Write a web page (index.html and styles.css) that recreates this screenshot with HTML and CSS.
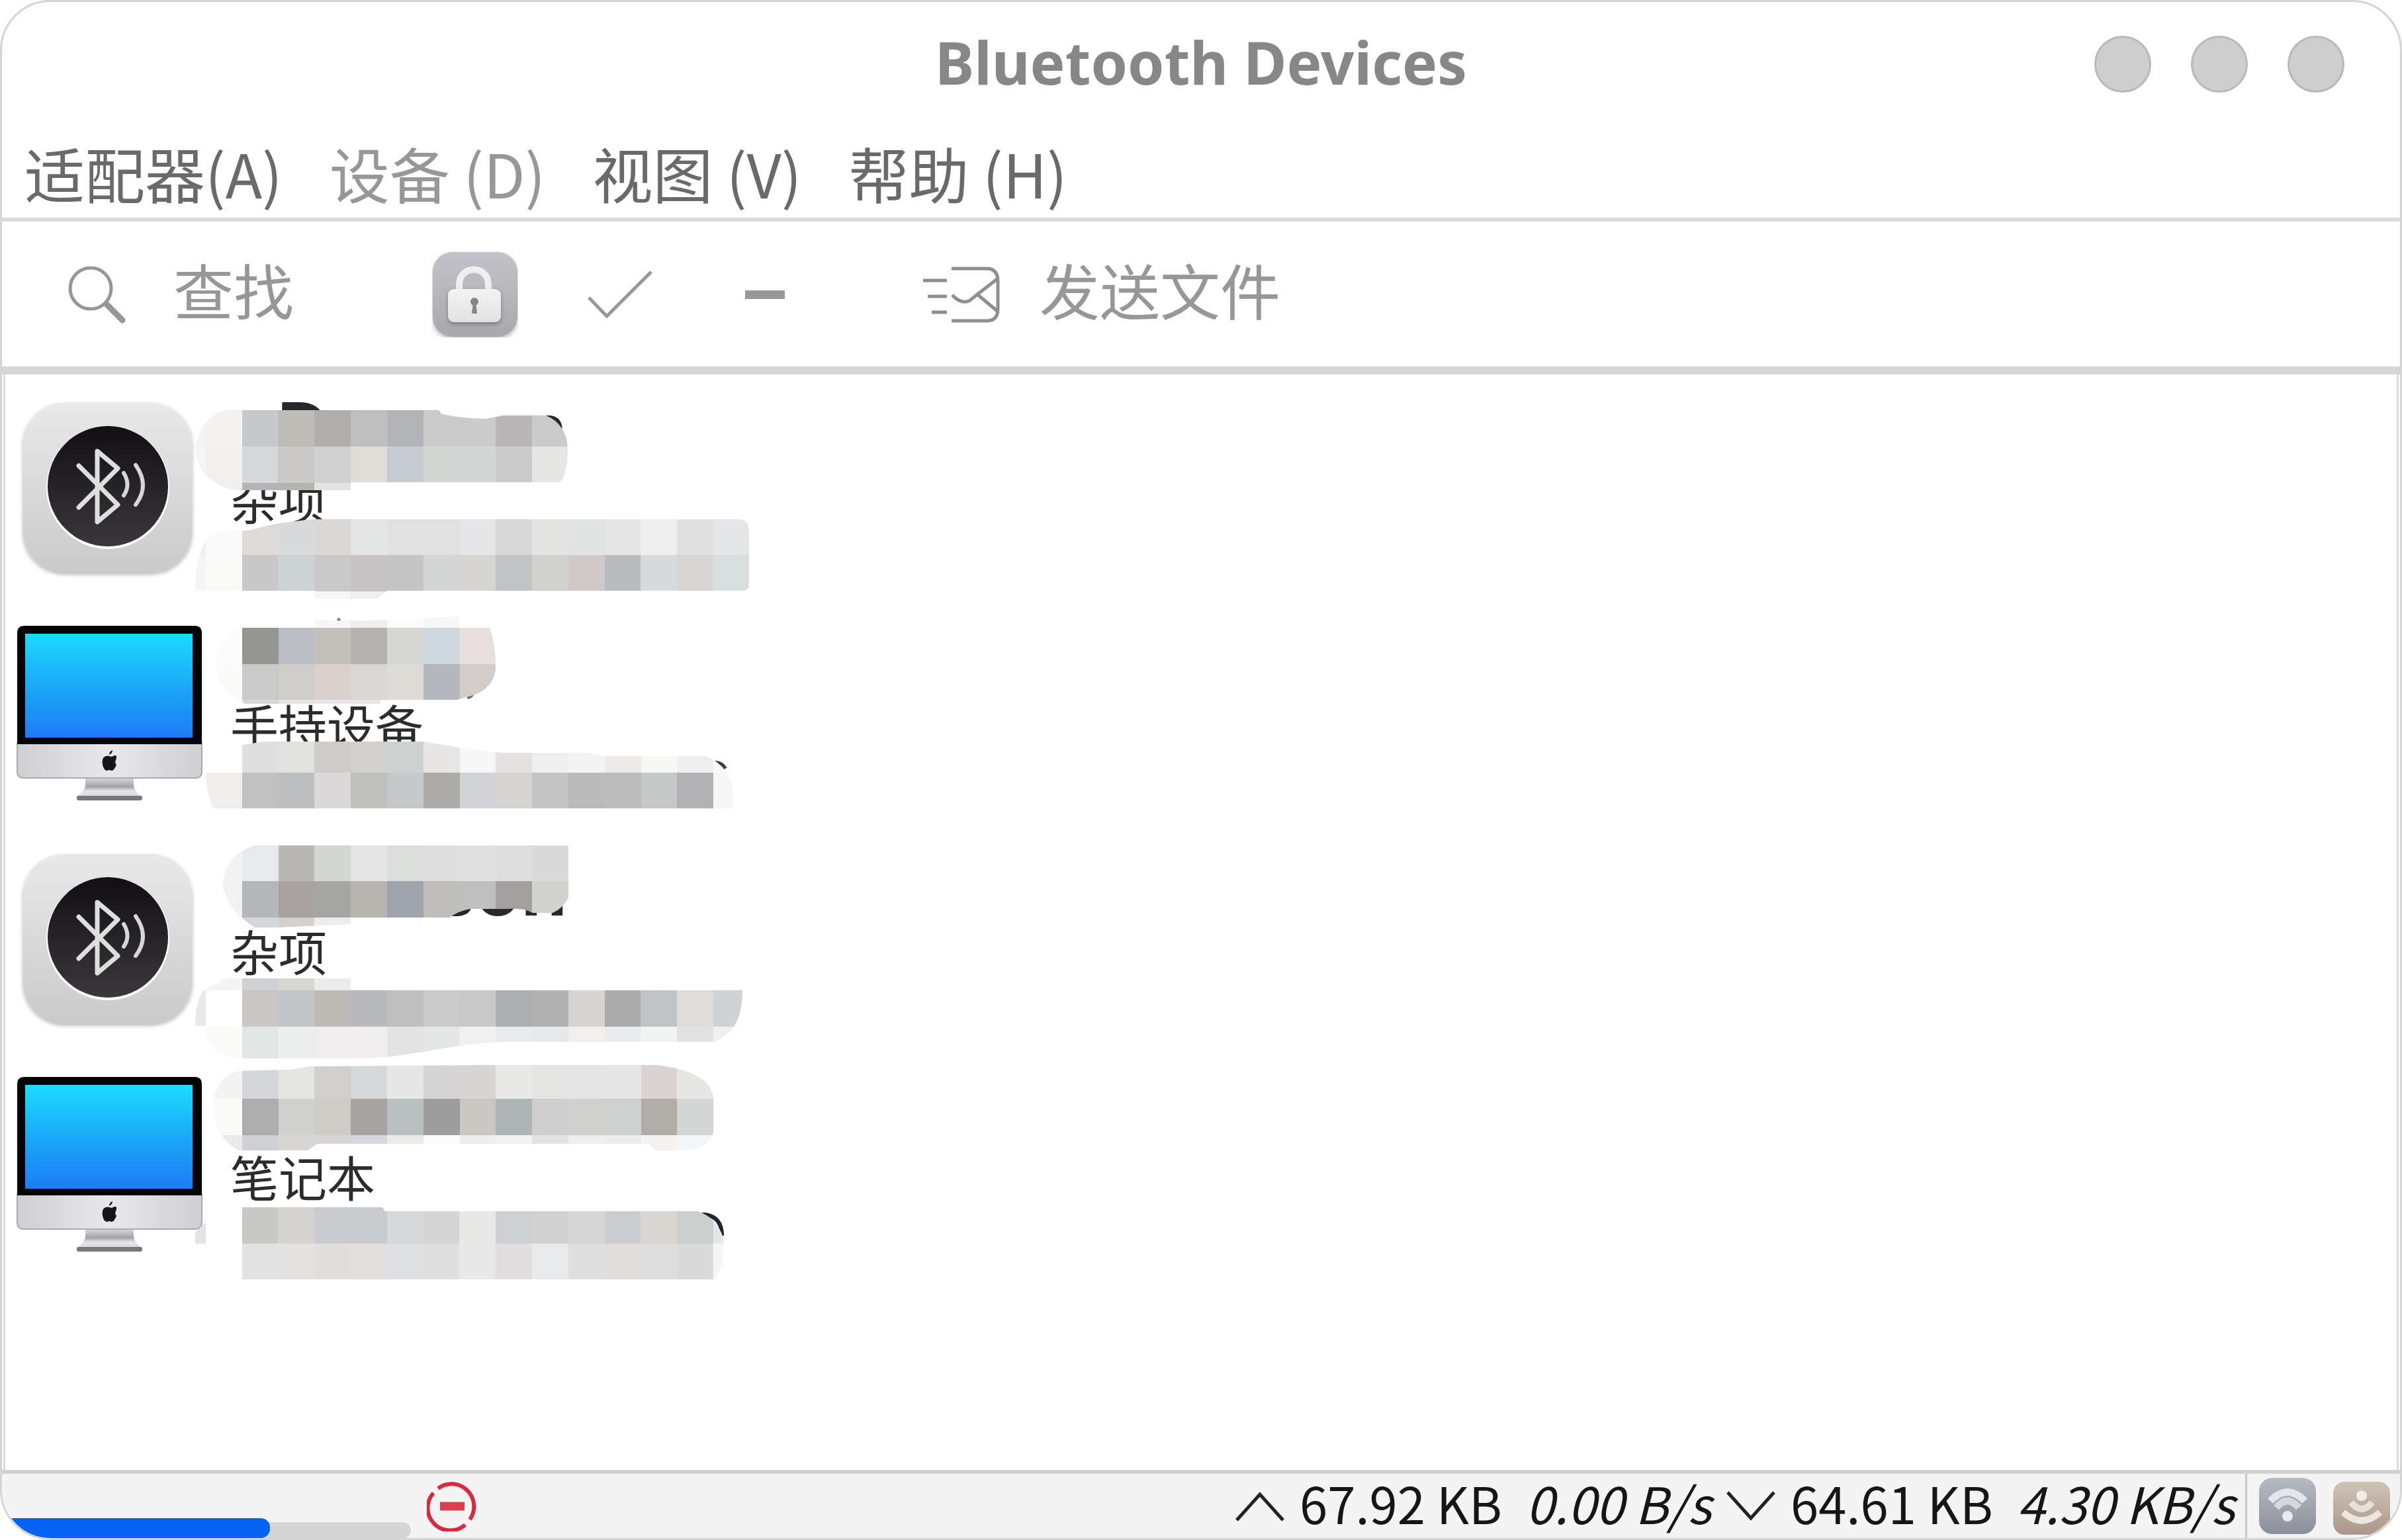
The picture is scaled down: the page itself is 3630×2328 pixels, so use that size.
FILE: index.html
```html
<!DOCTYPE html>
<html lang="zh-CN">
<head>
<meta charset="utf-8">
<title>Bluetooth Devices</title>
<link rel="stylesheet" href="styles.css">
</head>
<body>
<svg class="defs" width="0" height="0" aria-hidden="true">
  <defs>
    <linearGradient id="tile" x1="0" y1="0" x2="0" y2="1"><stop offset="0" stop-color="#e9e9e9"/><stop offset="1" stop-color="#cacaca"/></linearGradient>
    <linearGradient id="disc" x1="0" y1="0" x2="0" y2="1"><stop offset="0" stop-color="#110f13"/><stop offset="1" stop-color="#3a383b"/></linearGradient>
    <linearGradient id="screen" x1="0" y1="0" x2="0" y2="1"><stop offset="0" stop-color="#1cdcff"/><stop offset=".5" stop-color="#1ba9f7"/><stop offset="1" stop-color="#1c7cf6"/></linearGradient>
    <linearGradient id="chin" x1="0" y1="0" x2="1" y2="0"><stop offset="0" stop-color="#cfcfd1"/><stop offset=".5" stop-color="#e8e8ea"/><stop offset="1" stop-color="#cfcfd1"/></linearGradient>
    <linearGradient id="stand" x1="0" y1="0" x2="0" y2="1"><stop offset="0" stop-color="#d4d4d8"/><stop offset=".45" stop-color="#a4a4a6"/><stop offset=".7" stop-color="#e6e6ea"/><stop offset="1" stop-color="#d8d8dc"/></linearGradient>
    <linearGradient id="lockbg" x1="0" y1="0" x2="0" y2="1"><stop offset="0" stop-color="#c3c2c8"/><stop offset="1" stop-color="#a9a9ad"/></linearGradient>
    <linearGradient id="lockbody" x1="0" y1="0" x2="0" y2="1"><stop offset="0" stop-color="#f3f3f3"/><stop offset="1" stop-color="#e2e2e2"/></linearGradient>
    <linearGradient id="wifibg" x1="0" y1="0" x2="0" y2="1"><stop offset="0" stop-color="#b6bbc2"/><stop offset="1" stop-color="#8a8f9a"/></linearGradient>
    <linearGradient id="castbg" x1="0" y1="0" x2="0" y2="1"><stop offset="0" stop-color="#cfc3b8"/><stop offset="1" stop-color="#ab9888"/></linearGradient>
    <filter id="soft" x="-10%" y="-10%" width="120%" height="125%"><feDropShadow dx="0" dy="3" stdDeviation="3" flood-color="#000" flood-opacity=".3"/></filter>
    <symbol id="bluetooth" viewBox="0 0 320 341">
      <rect x="27" y="41" width="255" height="256" rx="62" fill="url(#tile)" filter="url(#soft)"/>
      <circle cx="155" cy="169" r="93" fill="#fff"/>
      <circle cx="155" cy="167" r="91" fill="url(#disc)"/>
      <path d="M111 136 170 195 139 221V114L170 140 111 199" fill="none" stroke="#dedede" stroke-width="7" stroke-linecap="round" stroke-linejoin="round"/>
      <path d="M179 147Q190 165 179 181M197 135Q219 166 197 195" fill="none" stroke="#d6d6d6" stroke-width="6" stroke-linecap="round"/>
    </symbol>
    <symbol id="computer" viewBox="0 0 320 341">
      <path d="M18 214H297V257Q297 267 287 267H28Q18 267 18 257Z" fill="url(#chin)" stroke="#ababad" stroke-width="2"/>
      <path d="M18 216V48Q18 37 29 37H286Q297 37 297 48V216Z" fill="#050505"/>
      <rect x="30" y="49" width="253" height="157" fill="url(#screen)"/>
      <path d="M121 268H194V278Q194 286 206 295H108Q121 286 121 278Z" fill="url(#stand)"/>
      <rect x="108" y="294" width="99" height="7" rx="3" fill="#77777b"/>
      <path d="M157 234Q161 236 165 233Q170 232 167 240Q165 244 168 247Q164 257 160 256Q157 254 154 256Q149 256 147 247Q145 236 152 234Q155 233 157 234ZM157 232Q157 227 162 225Q162 230 157 232Z" fill="#15141d"/>
    </symbol>
  </defs>
</svg>

<div class="window">
  <header class="titlebar">
    <h1 class="title">Bluetooth Devices</h1>
    <div class="window-buttons">
      <button class="dot" aria-label="最小化"></button>
      <button class="dot" aria-label="最大化"></button>
      <button class="dot" aria-label="关闭"></button>
    </div>
  </header>

  <nav class="menubar">
    <button class="menu">适配器(A)</button>
    <button class="menu" disabled>设备 (D)</button>
    <button class="menu">视图 (V)</button>
    <button class="menu">帮助 (H)</button>
  </nav>

  <div class="toolbar">
    <button class="tool search">
      <svg width="96" height="96" viewBox="0 0 96 96" fill="none" stroke="#979797"><circle cx="41" cy="39" r="31" stroke-width="5"/><path d="M65 63 89 87" stroke-width="9" stroke-linecap="round"/></svg>
      <span>查找</span>
    </button>
    <div class="tool-group">
      <button class="tool" aria-label="配对">
        <svg width="130" height="130" viewBox="0 0 130 130"><rect x="1" y="1" width="128" height="128" rx="30" fill="url(#lockbg)" filter="url(#soft)"/><path d="M41 62V50C41 20 85 20 85 50V62" fill="none" stroke="#efefef" stroke-width="10"/><rect x="24" y="57" width="80" height="50" rx="9" fill="url(#lockbody)" filter="url(#soft)"/><circle cx="64" cy="76" r="6" fill="#858589"/><path d="M62 76H66L68 94H60Z" fill="#858589"/></svg>
      </button>
      <button class="tool" aria-label="信任">
        <svg width="130" height="130" viewBox="0 0 130 130" fill="none" stroke="#979797" stroke-width="5"><path d="M18 70 45 98 112 31"/></svg>
      </button>
      <button class="tool" aria-label="移除">
        <svg width="130" height="130" viewBox="0 0 130 130"><rect x="35" y="59" width="60" height="13" fill="#979797"/></svg>
      </button>
    </div>
    <button class="tool send">
      <svg width="120" height="92" viewBox="0 0 120 92" fill="none" stroke="#8f8f8f" stroke-width="5"><path d="M45 7H98Q115 7 115 26V68Q115 86 98 86H45M115 22 84 46 73 55Q60 62 46 47M84 46 115 72M2 25H38M9 49H38M15 73H38"/></svg>
      <span>发送文件</span>
    </button>
  </div>

  <main class="list-frame">
    <ul class="devices">
      <li class="device">
        <svg class="device-icon"><use href="#bluetooth"/></svg>
        <span class="device-type">杂项</span>
        <svg class="mask" viewBox="8 566 1200 341">
          <clipPath id="a1"><path d="M340 618H663L668 624Q700 631 735 631L760 626H825Q858 640 858 680Q857 720 845 727H530V739H352Q300 725 295 680Q300 630 340 618Z"/></clipPath>
          <clipPath id="a2"><path d="M375 800 415 790 470 783H1115Q1132 783 1132 800V880Q1132 891 1122 891H585L570 903H476V891H295Q295 830 320 802Z"/></clipPath>
          <text x="417" y="684">D</text><text x="786" y="687">n</text>
          <g clip-path="url(#a1)" data-x="256" data-y="618" data-cells="f5f4f3 f3f2f0 c6c8ca bdbcb7 afaeac bfbfbf b3b4b7 cbcbcc cbcbcb bab6b7 cacaca|f5f5f5 f1f0ef d5d7d9 cbc9c7 d0d0d1 dddcd7 c7ccd3 d4d6d3 d4d6d5 cbcbcb e6e6e5|f5f5f5 f0efee b4b5b6 b3b4ae e2e2e2"></g>
          <g clip-path="url(#a2)" data-x="256" data-y="782" data-cells="f0f0f0 fafafa dddbd9 d8dadc dad8d6 e4e6e5 e1e1e1 e1e1e1 e6e6e8 d7d7d8 e3e3e1 e1e3e2 e5e5e5 eeeeee e0e0e0 e4e6e7|f5f5f5 fafaf8 c8c8c8 cdd2d4 c9c9c9 c8c4c6 c5c5c5 d3d6d4 d6d5d2 c1c3c6 d1d1ce cfcac7 b9bbbf d9dadc d8d6d4 d8dddd|ffffff ffffff ffffff ffffff f6f6f6 efeded f9f9f9"></g>
        </svg>
      </li>
      <li class="device">
        <svg class="device-icon"><use href="#computer"/></svg>
        <span class="device-type">手持设备</span>
        <svg class="mask" viewBox="8 907 1200 341">
          <clipPath id="b1"><path d="M366 947 476 942V936H560L694 930V947H740Q749 970 749 1010Q745 1040 712 1050L690 1056H575V1062H370Q330 1040 325 1001Q330 950 366 947Z"/></clipPath>
          <clipPath id="b2"><path d="M366 1124 400 1119H640L670 1124 705 1130 760 1136 890 1136 910 1141H1065Q1095 1150 1107 1185V1220H323Q312 1200 311 1166H366Z"/></clipPath>
          <path d="M506 940 512 931 518 940Z" fill="#75777c"/><path d="M706 1052Q714 1052 715 1043" fill="none" stroke="#5a6878" stroke-width="5"/><path d="M1080 1151Q1090 1150 1096 1160" fill="none" stroke="#314057" stroke-width="6"/>
          <g clip-path="url(#b1)" data-x="311" data-y="892" data-cells="ffffff ffffff ffffff f7f7f7 efeded fbfbfb f5f6f8|fcfcfc 959592 bbbec3 c3c0ba b3b2b0 d6d6d2 cfd7df e6e1dc|fafaf8 cacaca cfceca dad0ce d8d7d3 dcdbd6 b4b8bd d2cdc8|fafafa d5d7d9 e5e5e5 e7e5e6 e7e5e5 f0f0f0"></g>
          <g clip-path="url(#b2)" data-x="311" data-y="1111" data-cells="ffffff dfdfdf e1e1df cdcccb d4d0ce cfd1d0 e7e6e5 f5f6f5 e4e2e0 eeeeef f4f4f4 ebeae9 f7f7f5 eeeeee fafafa|efeeec c1c1c1 bcbec0 dad8d9 bfbfbc c4c8c9 aeacaa d1d3d6 d5d4d1 c5c5c5 bababa bcbcbc c5c8c6 b2b2b4 f6f6f6"></g>
        </svg>
      </li>
      <li class="device">
        <svg class="device-icon"><use href="#bluetooth"/></svg>
        <span class="device-type">杂项</span>
        <svg class="mask" viewBox="8 1248 1200 341">
          <clipPath id="c1"><path d="M385 1276H859V1355Q850 1372 835 1378H805Q790 1370 765 1372H710Q690 1376 680 1385H530V1395L420 1400H385Q345 1375 337 1340Q337 1290 385 1276Z"/></clipPath>
          <clipPath id="c2"><path d="M340 1477H530V1495H1122Q1122 1560 1078 1573H760C680 1575 620 1598 540 1598H355Q310 1590 308 1549H295Q295 1510 308 1495Z"/></clipPath>
          <text x="858" y="1382" text-anchor="end">son</text>
          <g clip-path="url(#c1)" data-x="311" data-y="1275" data-cells="f3f2f0 e8e9ea bab8b4 d4d6d4 e3e4e3 dbdddb dfdfdf dfe0df dedede dadada|f2f1ef b4b6b8 a8a3a0 a5a5a2 b6b4ae 9fa4ac c0bebb bfbfc0 a3a09f d2d2cf|f4f4f4 d5d6d9 d3d1ce ededed"></g>
          <g clip-path="url(#c2)" data-x="256" data-y="1440" data-cells="ffffff f4f4f2 d0d1d4 d6d6d3 ebebeb|e8e8e8 ffffff cac6c3 c2c6c8 bcbbb6 b7b9bc bfbfbf cbcbcc c9c9ca adaeb0 b1b1b1 d6d5d3 acacac c2c3c7 dedddb cfd3d6|fcfcfa fafaf8 e3e5e4 eceded efedee f0eeee e2e3e2 e5e7e6 f0f0f1 e9ebed e6e8ea f1f0ef e9ebed f2f3f3 e2e2e2 f0f0f0"></g>
        </svg>
      </li>
      <li class="device">
        <svg class="device-icon"><use href="#computer"/></svg>
        <span class="device-type">笔记本</span>
        <svg class="mask" viewBox="8 1589 1200 341">
          <clipPath id="d1"><path d="M360 1617 440 1615 470 1610 740 1608H995Q1078 1620 1078 1660V1710Q1070 1735 1035 1737H990L980 1727H480L465 1737H360Q322 1715 322 1670Q325 1625 360 1617Z"/></clipPath>
          <clipPath id="d2"><path d="M366 1819H575L582 1829H1055Q1085 1840 1093 1870Q1096 1910 1080 1932H366ZM295 1878V1862L311 1845V1878Z"/></clipPath>
          <path d="M1053 1834H1066Q1091 1838 1091 1866" fill="none" stroke="#1d2530" stroke-width="6"/>
          <g clip-path="url(#d1)" data-x="311" data-y="1604" data-cells="f4f3f1 d5d6d9 e4e4e3 d1d0ce d4d8da e6e6e7 d4d4d4 d9d4d4 e8e8e6 e4e4e2 e5e5e5 e6e6e6 d9d4d3 e6e6e4|fafaf8 adadae d0d0cf cdccc7 a6a3a0 babfc2 9d9d9d c8c7c2 afb4b5 cecece d0d0ce cecfcf b0aca6 d3d5d4|ebeaea ced0d3 d8d6d5 d7d5d4 d5d7dc ebe9e4 fafbfb eceded f1f1f1 e2e2e3 efeded ebedec f5f3f2 f3f5f6"></g>
          <g clip-path="url(#d2)" data-x="256" data-y="1823" data-cells="e3e3e3 fefefe c8c8c6 d4d3d1 c8cacd c8cacd d6d7da d5d5d6 e8e8e6 cecfd2 d1d1d2 d6d6d6 cbcdd0 d8d6d1 cccfce e4e6e8|ffffff ffffff e2e2e2 e3e1df e0dfdd e1e0de dfe0e3 dfdfdf e8e8e8 e1dedf e8eaec dfdfdf dfdedc dddddd dadada f5f5f5"></g>
        </svg>
      </li>
    </ul>
  </main>

  <footer class="statusbar">
    <div class="progress" role="progressbar" aria-label="查找进度" aria-valuenow="65"><div class="progress-fill"></div></div>
    <button class="stop" aria-label="停止">
      <svg width="76" height="76" viewBox="0 0 76 76" fill="none" stroke="#d9293f" stroke-width="6"><path d="M17 11A34 34 0 0 1 65 58M58 66A34 34 0 0 1 10 18"/><path d="M20 38H57" stroke="#db4052" stroke-width="13"/></svg>
    </button>
    <div class="traffic">
      <svg width="76" height="48" viewBox="0 0 76 48"><path d="M3 45 38 6 73 45" fill="none" stroke="#222" stroke-width="5"/></svg>
      <span class="total">67.92 KB</span>
      <em class="rate">0.00 B/s</em>
      <svg width="76" height="48" viewBox="0 0 76 48"><path d="M3 3 38 42 73 3" fill="none" stroke="#222" stroke-width="5"/></svg>
      <span class="total">64.61 KB</span>
      <em class="rate">4.30 KB/s</em>
    </div>
    <div class="tray">
      <svg width="88" height="88" viewBox="0 0 88 88"><rect x="1" y="1" width="86" height="85" rx="20" fill="url(#wifibg)"/><path d="M18 36Q44 9 70 36" fill="none" stroke="#e4e6e9" stroke-width="11"/><path d="M27 46Q44 26 61 46" fill="none" stroke="#d4d7dc" stroke-width="11"/><circle cx="44" cy="59" r="8" fill="#e8e9eb"/></svg>
      <svg width="88" height="88" viewBox="0 0 88 88"><rect x="1" y="7" width="86" height="80" rx="17" fill="url(#castbg)"/><circle cx="44" cy="28" r="8" fill="#f0ece8"/><path d="M28 38Q44 58 60 38" fill="none" stroke="#e8e1da" stroke-width="10"/><path d="M16 53Q44 78 72 53" fill="none" stroke="#ece6df" stroke-width="10"/></svg>
    </div>
  </footer>
</div>
<script src="mosaic.js"></script>
</body>
</html>
```
FILE: styles.css
```css
* {
  box-sizing: border-box;
}

body {
  margin: 0;
  background: #fff;
  font-family: "Noto Sans CJK SC", sans-serif;
}

svg {
  display: block;
  flex: none;
}

button {
  border: 0;
  margin: 0;
  padding: 0;
  background: none;
  font: inherit;
  color: inherit;
}

.defs {
  position: absolute;
}

.window {
  display: flex;
  flex-direction: column;
  min-height: 100vh;
  overflow: hidden;
  border: 3px solid #d6d5d5;
  border-radius: 76px;
  background: #fefefe;
}

.titlebar {
  display: grid;
  grid-template-columns: 1fr auto 1fr;
  align-items: center;
  height: 188px;
}

.title {
  grid-column: 2;
  margin: 0;
  padding-bottom: 6px;
  font: bold 89px/120px "Noto Sans", sans-serif;
  color: #878787;
}

.window-buttons {
  display: flex;
  justify-content: flex-end;
  gap: 60px;
  padding-right: 84px;
}

.dot {
  width: 86px;
  height: 86px;
  border: 3px solid #b9b9b9;
  border-radius: 50%;
  background: #cecece;
}

.menubar {
  display: flex;
  gap: 71px;
  padding-left: 34px;
  border-bottom: 6px solid #dadada;
}

.menu {
  font-size: 91px;
  line-height: 138px;
  color: #6a6a6a;
  white-space: nowrap;
}

.menu:disabled {
  color: #979797;
}

.toolbar {
  display: flex;
  align-items: center;
  gap: 172px;
  height: 231px;
  padding-left: 93px;
  border-bottom: 12px solid #d6d6d6;
}

.tool {
  display: flex;
  align-items: center;
  font-size: 91px;
  line-height: 120px;
  color: #979797;
  white-space: nowrap;
}

.tool span {
  padding-bottom: 18px;
}

.search {
  gap: 70px;
  padding-right: 37px;
}

.send {
  gap: 58px;
}

.tool-group {
  display: flex;
  gap: 89px;
}

.list-frame {
  flex: 1;
  margin: 0 2px;
  padding-top: 2px;
  border: solid #dcdcdc;
  border-width: 0 3px;
  background: #fff;
}

.devices {
  margin: 0;
  padding: 0;
  list-style: none;
}

.device {
  position: relative;
  display: flex;
  align-items: center;
  gap: 20px;
}

.device-icon {
  width: 320px;
  height: 341px;
}

.device-type {
  padding-top: 30px;
  font-size: 73px;
  line-height: 100px;
  color: #2c2c2c;
}

.mask {
  position: absolute;
  top: 0;
  left: 0;
  width: 1200px;
  height: 341px;
  overflow: visible;
  font: bold 110px "Noto Sans", sans-serif;
  fill: #26282b;
}

.statusbar {
  display: flex;
  align-items: center;
  height: 103px;
  border-top: 6px solid #d2d2d2;
  background: #f4f4f4;
}

.progress {
  display: flex;
  align-self: flex-end;
  align-items: flex-end;
  width: 618px;
  height: 24px;
  border-radius: 12px;
  background: #d5d5d5;
}

.progress-fill {
  width: 405px;
  height: 30px;
  border-radius: 14px;
  background: #0762f4;
}

.stop {
  margin-left: 24px;
}

.traffic {
  display: flex;
  align-items: center;
  margin-left: auto;
  font-size: 76px;
  line-height: 84px;
  color: #161616;
  white-space: nowrap;
}

.traffic span,
.traffic em {
  padding-bottom: 12px;
}

.total {
  margin-left: 22px;
}

.rate {
  margin: 0 22px 0 36px;
}

.traffic em:last-child {
  margin-right: 16px;
}

.tray {
  display: flex;
  align-self: stretch;
  align-items: center;
  gap: 24px;
  padding: 0 14px 0 17px;
  border-left: 3px solid #c6c6c6;
}
```
FILE: mosaic.js
```js
// Fills each masked area with its grid of colour blocks.
const PITCH = 54.8;
document.querySelectorAll("[data-cells]").forEach((group) => {
  const x0 = Number(group.dataset.x);
  const y0 = Number(group.dataset.y);
  group.dataset.cells.split("|").forEach((line, row) => {
    line.split(" ").forEach((colour, col) => {
      const left = Math.round(x0 + col * PITCH);
      const top = Math.round(y0 + row * PITCH);
      const block = document.createElementNS("http://www.w3.org/2000/svg", "rect");
      block.setAttribute("x", left);
      block.setAttribute("y", top);
      block.setAttribute("width", Math.round(x0 + (col + 1) * PITCH) - left);
      block.setAttribute("height", Math.round(y0 + (row + 1) * PITCH) - top);
      block.setAttribute("fill", "#" + colour);
      group.appendChild(block);
    });
  });
});
```
